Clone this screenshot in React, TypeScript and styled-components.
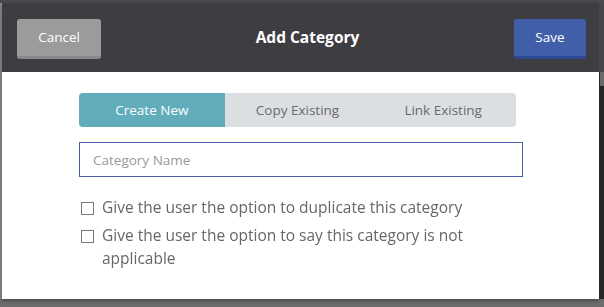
import React, { useState } from 'react';
import styled, { createGlobalStyle } from 'styled-components';

const Global = createGlobalStyle`
  html, body { margin: 0; padding: 0; }
  body {
    font-family: "Open Sans", "Noto Sans", sans-serif;
    background: #6d6d6d;
  }
`;

const Page = styled.div`
  width: 604px;
  height: 307px;
  display: flex;
  flex-direction: column;
  overflow: hidden;
  background: #6d6d6d;
`;

const TopStrip = styled.div`
  height: 3px;
  background: #4a494e;
  flex-shrink: 0;
`;

const Row = styled.div`
  display: flex;
  height: 296px;
  flex-shrink: 0;
`;

const LeftEdge = styled.div`
  width: 2px;
  background: #8a8a8a;
`;

const RightEdge = styled.div`
  width: 5px;
  display: flex;
  flex-direction: column;
  background: #262626;

  .top {
    height: 69px;
    background: #47464b;
  }
  .thumb {
    height: 14px;
    margin-left: 1px;
    background: #6a6a6a;
  }
`;

const Modal = styled.div`
  width: 597px;
  display: flex;
  flex-direction: column;
  background: #fff;
  box-shadow: 0 2px 4px rgba(0, 0, 0, 0.35);
`;

const Header = styled.div`
  height: 69px;
  box-sizing: border-box;
  padding: 16px 13px 0 15px;
  display: flex;
  align-items: flex-start;
  justify-content: space-between;
  background: #3e3d42;
`;

const Title = styled.div`
  color: #fff;
  font-size: 15.5px;
  font-weight: 700;
  line-height: 37px;
`;

const HeaderButton = styled.button<{ $tone: 'grey' | 'blue' }>`
  height: 40px;
  box-sizing: border-box;
  padding: 0;
  border: none;
  border-radius: 3px;
  border-bottom: 3px solid ${(p) => (p.$tone === 'grey' ? '#898989' : '#2d4894')};
  background: ${(p) => (p.$tone === 'grey' ? '#9b9b9b' : '#415fa9')};
  color: #fff;
  font-family: inherit;
  font-size: 13.5px;
  width: ${(p) => (p.$tone === 'grey' ? '84px' : '72px')};
  line-height: 37px;
`;

const Body = styled.div`
  padding: 21px 0 0 77px;
  display: flex;
  flex-direction: column;
`;

const Tabs = styled.div`
  width: 437px;
  height: 34px;
  display: grid;
  grid-template-columns: 1fr 1fr 1fr;
  border-radius: 4px;
  overflow: hidden;
  background: #dcdfe2;
`;

const Tab = styled.div<{ $active?: boolean }>`
  display: flex;
  align-items: center;
  justify-content: center;
  font-size: 13.5px;
  color: ${(p) => (p.$active ? '#fff' : '#6a6a6a')};
  background: ${(p) => (p.$active ? '#61adbc' : 'transparent')};
`;

const NameInput = styled.input`
  margin-top: 15px;
  width: 444px;
  height: 35px;
  box-sizing: border-box;
  border: 1px solid #4660aa;
  padding: 0 0 0 13px;
  font-family: inherit;
  font-size: 13.5px;
  color: #333;
  outline: none;
  caret-color: #000;

  &::placeholder {
    color: #9a9a9a;
  }
`;

const Options = styled.div`
  margin-top: 19px;
  display: flex;
  flex-direction: column;
  gap: 5px;
`;

const Option = styled.label`
  display: flex;
  align-items: flex-start;
  gap: 8px;
  font-size: 15.5px;
  line-height: 23px;
  color: #676767;
`;

const Box = styled.span`
  flex-shrink: 0;
  width: 11px;
  height: 11px;
  margin-top: 6px;
  margin-left: 2px;
  border: 1px solid #7a7a7a;
  background: #fff;
`;

const OptionText = styled.span`
  width: 372px;
`;

const tabs = ['Create New', 'Copy Existing', 'Link Existing'];
const options = [
  'Give the user the option to duplicate this category',
  'Give the user the option to say this category is not applicable',
];

export default function App() {
  const [active, setActive] = useState(0);
  return (
    <Page>
      <Global />
      <TopStrip />
      <Row>
        <LeftEdge />
        <Modal>
          <Header>
            <HeaderButton $tone="grey">Cancel</HeaderButton>
            <Title>Add Category</Title>
            <HeaderButton $tone="blue">Save</HeaderButton>
          </Header>
          <Body>
            <Tabs>
              {tabs.map((t, i) => (
                <Tab key={t} $active={i === active} onClick={() => setActive(i)}>
                  {t}
                </Tab>
              ))}
            </Tabs>
            <NameInput placeholder="Category Name" autoFocus />
            <Options>
              {options.map((o) => (
                <Option key={o}>
                  <Box />
                  <OptionText>{o}</OptionText>
                </Option>
              ))}
            </Options>
          </Body>
        </Modal>
        <RightEdge>
          <div className="top" />
          <div className="thumb" />
        </RightEdge>
      </Row>
    </Page>
  );
}
